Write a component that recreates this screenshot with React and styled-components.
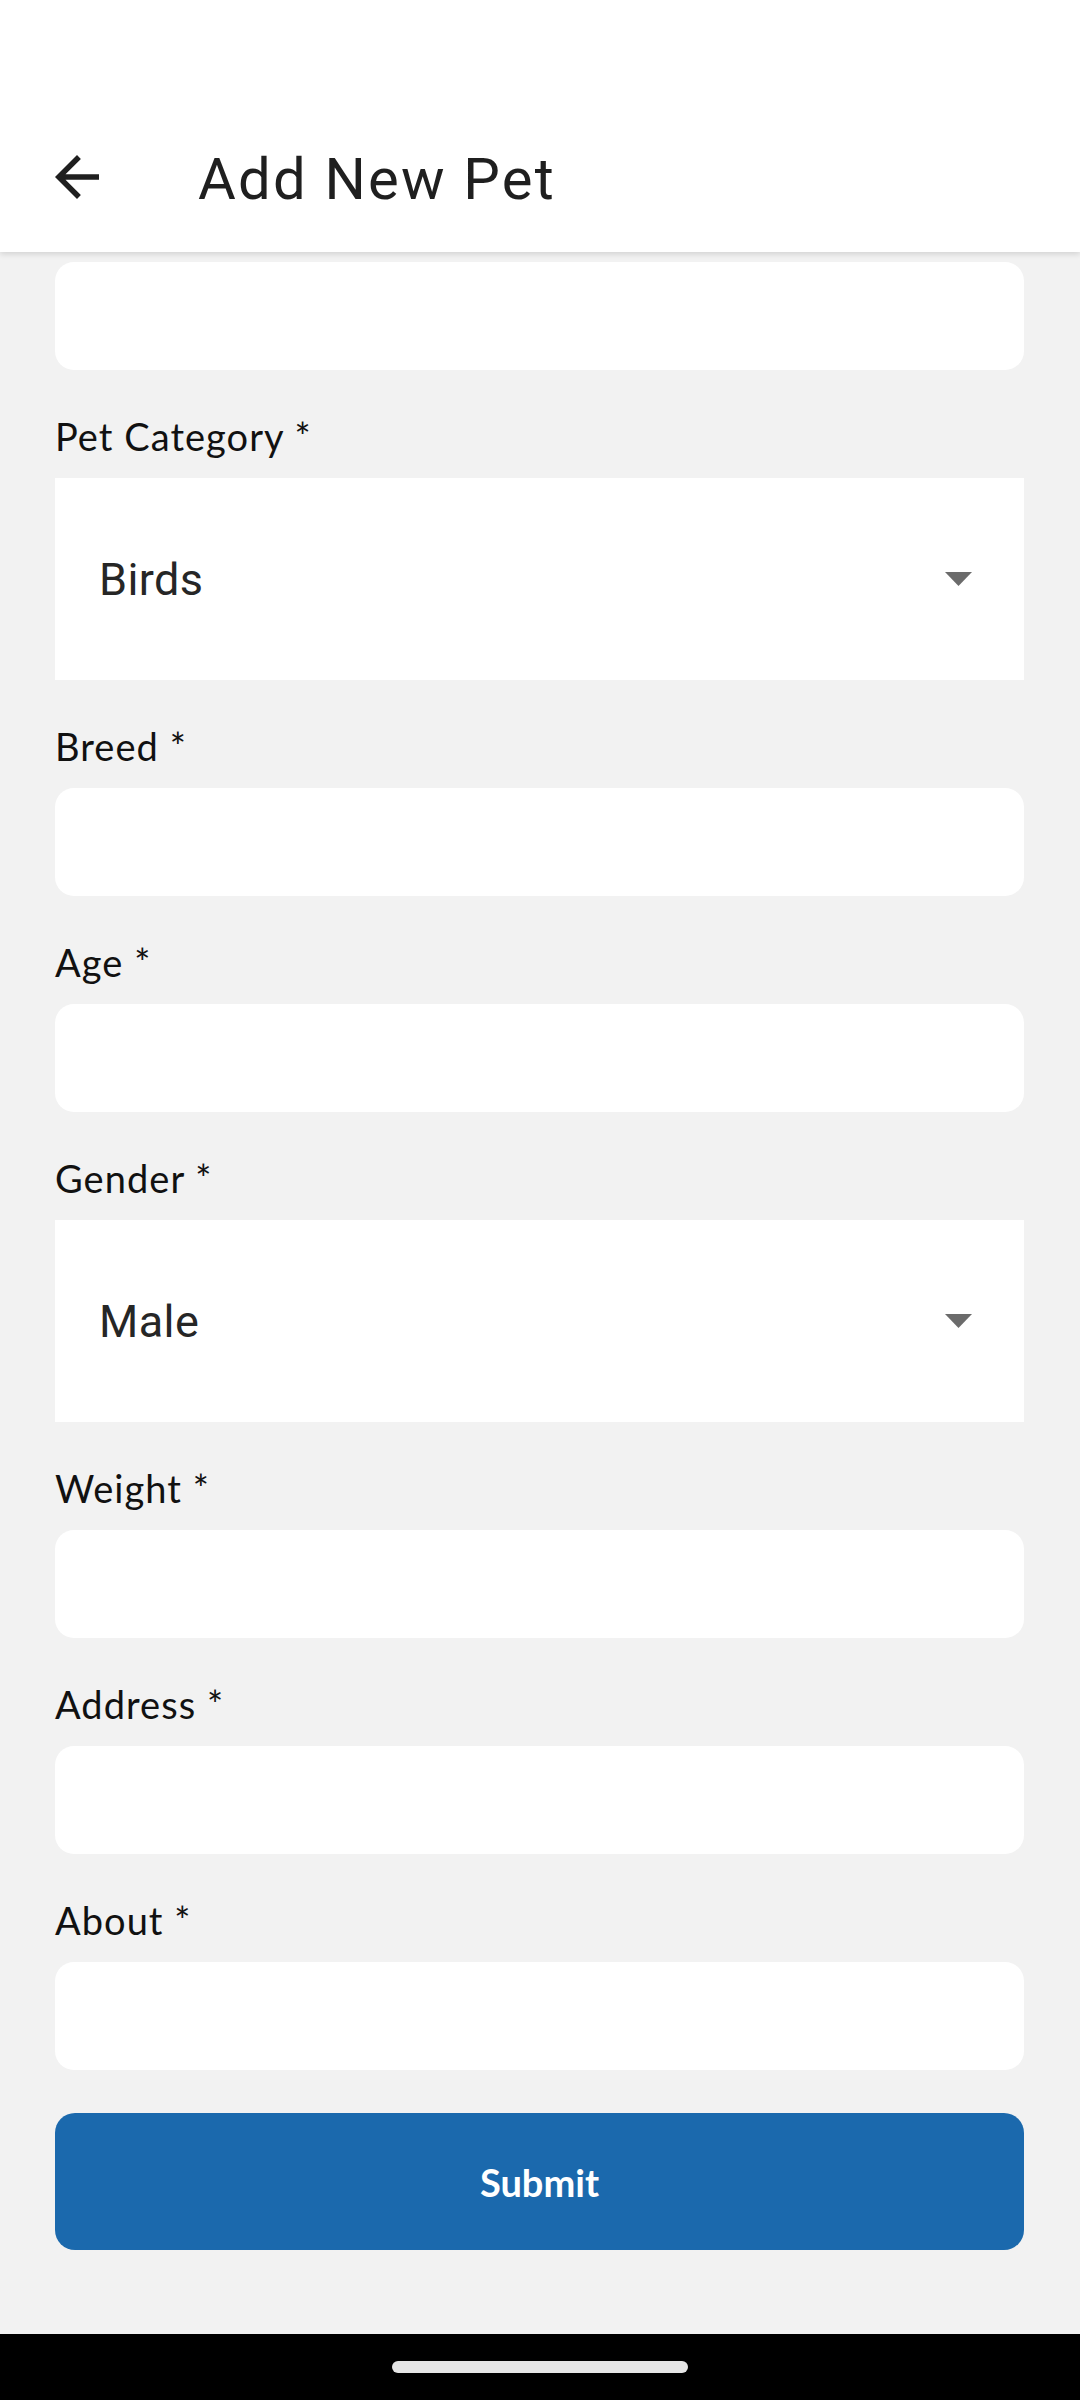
import React from 'react';
import styled, { createGlobalStyle } from 'styled-components';

const GlobalStyle = createGlobalStyle`
  html, body {
    margin: 0;
    padding: 0;
    background: #f2f2f2;
  }
  * {
    box-sizing: border-box;
  }
`;

const Screen = styled.div`
  width: 1080px;
  min-height: 2400px;
  display: flex;
  flex-direction: column;
  background: #f2f2f2;
  font-family: Lato, 'Open Sans', sans-serif;
`;

const Header = styled.header`
  height: 252px;
  padding-top: 101px;
  background: #ffffff;
  box-shadow: 0 2px 6px rgba(0, 0, 0, 0.14);
  position: relative;
  z-index: 1;
`;

const Toolbar = styled.div`
  height: 151px;
  display: flex;
  align-items: center;
  padding-left: 44px;
`;

const BackButton = styled.div`
  width: 66px;
  height: 66px;
  display: grid;
  place-content: center;
  margin-right: 88px;
  color: #1f1f1f;
`;

const Title = styled.h1`
  margin: 5px 0 0;
  font-family: Roboto, 'Liberation Sans', sans-serif;
  font-weight: 400;
  font-size: 58px;
  color: #1f1f1f;
  letter-spacing: 2.2px;
`;

const Form = styled.main`
  flex: 1;
  display: flex;
  flex-direction: column;
  gap: 43px;
  padding: 10px 56px 0 55px;
`;

const Field = styled.div`
  display: flex;
  flex-direction: column;
  gap: 19px;
`;

const Label = styled.label`
  font-size: 38px;
  line-height: 46px;
  letter-spacing: 1.05px;
  color: #111111;
`;

const Input = styled.div`
  height: 108px;
  background: #ffffff;
  border-radius: 19px;
`;

const Select = styled.div`
  height: 202px;
  background: #ffffff;
  display: flex;
  align-items: center;
  justify-content: space-between;
  padding: 0 52px 0 44px;
`;

const SelectValue = styled.span`
  font-family: Roboto, 'Liberation Sans', sans-serif;
  font-size: 45px;
  letter-spacing: 0.4px;
  color: #262626;
`;

const SubmitButton = styled.button`
  height: 137px;
  border: none;
  border-radius: 20px;
  background: #1b69ad;
  color: #ffffff;
  font-family: Lato, 'Open Sans', sans-serif;
  font-weight: 700;
  font-size: 38px;
`;

const NavBar = styled.div`
  height: 66px;
  margin-top: 83px;
  background: #000000;
  display: flex;
  align-items: center;
  justify-content: center;
`;

const NavPill = styled.div`
  width: 296px;
  height: 12px;
  border-radius: 6px;
  background: #e6e6e6;
`;

function BackArrow() {
  return (
    <svg width="66" height="66" viewBox="0 0 24 24" fill="currentColor">
      <path d="M20 11H7.83l5.59-5.59L12 4l-8 8 8 8 1.41-1.41L7.83 13H20v-2z" />
    </svg>
  );
}

function Caret() {
  return (
    <svg width="27" height="14" viewBox="0 0 27 14">
      <path d="M0 0h27L13.5 14z" fill="#6b6b6b" />
    </svg>
  );
}

const fields = [
  { label: 'Pet Category *', select: 'Birds' },
  { label: 'Breed *' },
  { label: 'Age *' },
  { label: 'Gender *', select: 'Male' },
  { label: 'Weight *' },
  { label: 'Address *' },
  { label: 'About *' },
];

export default function App() {
  return (
    <>
      <GlobalStyle />
      <Screen>
        <Header>
          <Toolbar>
            <BackButton>
              <BackArrow />
            </BackButton>
            <Title>Add New Pet</Title>
          </Toolbar>
        </Header>

        <Form>
          <Input />
          {fields.map((f) => (
            <Field key={f.label}>
              <Label>{f.label}</Label>
              {f.select ? (
                <Select>
                  <SelectValue>{f.select}</SelectValue>
                  <Caret />
                </Select>
              ) : (
                <Input />
              )}
            </Field>
          ))}
          <SubmitButton>Submit</SubmitButton>
        </Form>

        <NavBar>
          <NavPill />
        </NavBar>
      </Screen>
    </>
  );
}
